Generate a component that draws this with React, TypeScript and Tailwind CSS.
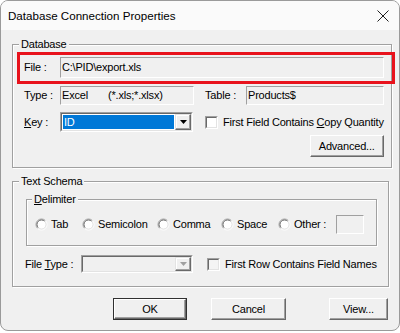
import React from "react";

const sunken = "border border-t-[#a0a0a0] border-l-[#a0a0a0] border-r-white border-b-white";

function GroupBox({ label, className, children }: { label: React.ReactNode; className?: string; children: React.ReactNode }) {
  return (
    <fieldset className={`border border-[#a0a0a0] shadow-[1px_1px_0_#fff,inset_1px_1px_0_#fff] ${className ?? ""}`}>
      <legend className="ml-[6px] px-[2px] leading-[13px] bg-[#f0f0f0]">{label}</legend>
      {children}
    </fieldset>
  );
}

function Field({ className, children }: { className?: string; children?: React.ReactNode }) {
  return <div className={`h-full flex items-center px-[1px] whitespace-nowrap ${sunken} ${className ?? ""}`}>{children}</div>;
}

function Checkbox({ disabled }: { disabled?: boolean }) {
  return (
    <div className={`w-[13px] h-[13px] shrink-0 ${sunken}`}>
      <div
        className={`w-full h-full border border-t-[#696969] border-l-[#696969] border-r-[#e3e3e3] border-b-[#e3e3e3] ${
          disabled ? "bg-[#f4f4f4]" : "bg-white"
        }`}
      />
    </div>
  );
}

function Radio({ label, className }: { label: string; className?: string }) {
  return (
    <div className={`flex items-center gap-[3px] ${className ?? ""}`}>
      <svg width="13" height="13" viewBox="0 0 13 13" className="shrink-0">
        <circle cx="6.5" cy="6.5" r="4.5" fill="#fff" />
        <path d="M2.6 10.4 A5.5 5.5 0 0 1 10.4 2.6" fill="none" stroke="#a0a0a0" />
        <path d="M3.3 9.7 A4.5 4.5 0 0 1 9.7 3.3" fill="none" stroke="#696969" />
        <path d="M10.4 2.6 A5.5 5.5 0 0 1 2.6 10.4" fill="none" stroke="#fff" />
        <path d="M9.7 3.3 A4.5 4.5 0 0 1 3.3 9.7" fill="none" stroke="#e3e3e3" />
      </svg>
      <span className="whitespace-nowrap">{label}</span>
    </div>
  );
}

function DropButton({ disabled }: { disabled?: boolean }) {
  return (
    <div className="w-[16px] h-full shrink-0 border border-t-[#e3e3e3] border-l-[#e3e3e3] border-r-[#696969] border-b-[#696969] shadow-[inset_-1px_-1px_0_#a0a0a0,inset_1px_1px_0_#fff] bg-[#f0f0f0] flex items-center justify-center">
      <svg width="7" height="4" viewBox="0 0 7 4">
        <polygon points="0,0 7,0 3.5,4" fill={disabled ? "#a0a0a0" : "#000"} />
      </svg>
    </div>
  );
}

function Combo({ className, disabled, value }: { className?: string; disabled?: boolean; value?: string }) {
  return (
    <div className={`h-full ${sunken} ${className ?? ""}`}>
      <div
        className={`h-full flex border border-t-[#696969] border-l-[#696969] border-r-[#e3e3e3] border-b-[#e3e3e3] ${
          disabled ? "bg-[#f0f0f0]" : "bg-white"
        }`}
      >
        <div className="flex-1 p-[1px]">
          {value && <div className="h-full bg-[#0078d7] text-white flex items-center pl-[1px]">{value}</div>}
        </div>
        <DropButton disabled={disabled} />
      </div>
    </div>
  );
}

function Button({ children, className, isDefault }: { children: React.ReactNode; className?: string; isDefault?: boolean }) {
  return (
    <div className={`h-[22px] ${isDefault ? "border border-[#303030]" : ""} ${className ?? ""}`}>
      <div className="h-full border border-t-white border-l-white border-r-[#696969] border-b-[#696969] shadow-[inset_-1px_-1px_0_#a0a0a0] bg-[#f0f0f0] flex items-center justify-center whitespace-nowrap">
        {children}
      </div>
    </div>
  );
}

export default function App() {
  return (
    <div className="w-[400px] h-[333px] bg-white font-['Liberation_Sans',Arial,sans-serif] text-[11px] tracking-[-0.2px] text-black">
      <div className="w-[400px] h-[331px] border border-[#9a9a9a] rounded-[8px] overflow-hidden bg-[#f0f0f0] flex flex-col">
        <div className="h-[29px] shrink-0 bg-[#fafafa] flex items-center justify-between pl-[7px] pr-[10px]">
          <span className="text-[11.6px] tracking-normal">Database Connection Properties</span>
          <svg width="12" height="12" viewBox="0 0 12 12">
            <path d="M0.5 0.5 L11.5 11.5 M11.5 0.5 L0.5 11.5" stroke="#1f1f1f" strokeWidth="1" />
          </svg>
        </div>

        <div className="pl-[11px] pr-[10px]">
          <GroupBox label="Database" className="mt-[8px]">
            <div className="pl-[11px] pr-[7px] pt-[6px] pb-[10px]">
              <div className="relative h-[21px] flex items-center">
                <span className="w-[36px] shrink-0">File :</span>
                <Field className="flex-1">C:\PID\export.xls</Field>
                <div className="absolute -left-[7px] -right-[11px] -top-[5px] -bottom-[6px] border-[3px] border-[#e8121c] pointer-events-none" />
              </div>

              <div className="mt-[8px] h-[19px] flex items-center">
                <span className="w-[36px] shrink-0">Type :</span>
                <Field className="w-[134px]">
                  <span className="w-[46px] shrink-0">Excel</span>
                  <span>(*.xls;*.xlsx)</span>
                </Field>
                <span className="ml-[11px] w-[41px] shrink-0">Table :</span>
                <Field className="flex-1">Products$</Field>
              </div>

              <div className="mt-[7px] h-[20px] flex items-center">
                <span className="w-[36px] shrink-0">
                  <span className="underline">K</span>ey :
                </span>
                <Combo className="w-[133px]" value="ID" />
                <div className="ml-[12px]">
                  <Checkbox />
                </div>
                <span className="ml-[5px] whitespace-nowrap">
                  First Field Contains <span className="underline">C</span>opy Quantity
                </span>
              </div>

              <div className="mt-[3px] flex justify-end">
                <Button className="w-[74px]">Advanced...</Button>
              </div>
            </div>
          </GroupBox>

          <GroupBox label="Text Schema" className="mt-[7px]">
            <div className="pl-[12px] pr-[11px] pt-[5px] pb-[13px]">
              <fieldset className="ml-[1px] border border-[#a0a0a0] shadow-[1px_1px_0_#fff,inset_1px_1px_0_#fff]">
                <legend className="ml-[5px] px-[2px] leading-[13px] bg-[#f0f0f0]">
                  <span className="underline">D</span>elimiter
                </legend>
                <div className="pl-[8px] pt-[9px] pb-[11px]">
                  <div className="h-[19px] flex items-center">
                    <Radio label="Tab" className="w-[47px]" />
                    <Radio label="Semicolon" className="w-[75px]" />
                    <Radio label="Comma" className="w-[64px]" />
                    <Radio label="Space" className="w-[57px]" />
                    <Radio label="Other :" className="w-[58px]" />
                    <div className={`w-[28px] h-full ${sunken}`} />
                  </div>
                </div>
              </fieldset>

              <div className="mt-[9px] h-[18px] flex items-center">
                <span className="w-[56px] shrink-0 whitespace-nowrap">
                  File <span className="underline">T</span>ype :
                </span>
                <Combo className="w-[112px]" disabled />
                <div className="ml-[14px]">
                  <Checkbox disabled />
                </div>
                <span className="ml-[5px] whitespace-nowrap">First Row Contains Field Names</span>
              </div>
            </div>
          </GroupBox>

          <div className="mt-[11px] flex">
            <Button className="ml-[101px] w-[74px]" isDefault>
              OK
            </Button>
            <Button className="ml-[24px] w-[75px]">Cancel</Button>
            <Button className="ml-[43px] w-[59px]">View...</Button>
          </div>
        </div>
      </div>
    </div>
  );
}
